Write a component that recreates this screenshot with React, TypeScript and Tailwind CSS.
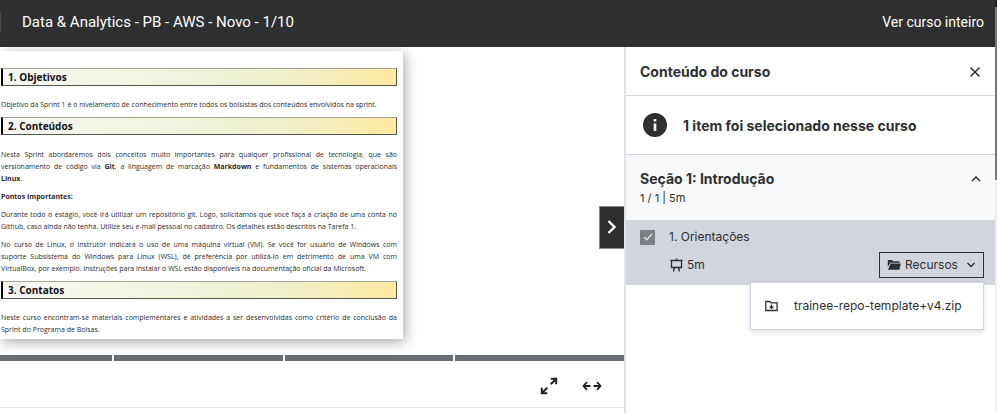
import type { ReactNode } from "react";

function Heading({ children }: { children: ReactNode }) {
  return (
    <h2 className="flex h-[18px] items-center border border-l-2 border-[#55564a] border-t-[#a3a491] border-l-black bg-linear-to-r from-[#f7f8f6] via-[#eef0cd] via-70% to-[#ffe9a0] pl-[5px] font-['Open_Sans',sans-serif] text-[10px] font-bold text-[#111]">
      {children}
    </h2>
  );
}

function Paragraph({ lines, last }: { lines: ReactNode[]; last?: ReactNode }) {
  return (
    <p className="text-[7px] leading-3">
      {lines.map((line, i) => (
        <span key={i} className="block whitespace-nowrap [text-align-last:justify]">
          {line}
        </span>
      ))}
      {last && <span className="block whitespace-nowrap">{last}</span>}
    </p>
  );
}

function Slide() {
  return (
    <article className="w-[403px] bg-white px-px pt-[17px] pr-1.5 pb-[3px] font-['Open_Sans',sans-serif] text-[#2b2b2b] shadow-[2px_3px_12px_rgba(0,0,0,0.35)]">
      <Heading>1. Objetivos</Heading>
      <div className="pt-[13px] pb-1.5">
        <Paragraph
          lines={[]}
          last="Objetivo da Sprint 1 é o nivelamento de conhecimento entre todos os bolsistas dos conteúdos envolvidos na sprint."
        />
      </div>
      <Heading>2. Conteúdos</Heading>
      <div className="flex flex-col gap-1.5 pt-3.5 pb-1.5">
        <Paragraph
          lines={[
            "Nesta Sprint abordaremos dois conceitos muito importantes para qualquer profissional de tecnologia, que são",
            <>versionamento de código via <b>Git</b>, a linguagem de marcação <b>Markdown</b> e fundamentos de sistemas operacionais</>,
          ]}
          last={<><b>Linux</b>.</>}
        />
        <Paragraph lines={[]} last={<b>Pontos Importantes:</b>} />
        <Paragraph
          lines={["Durante todo o estágio, você irá utilizar um repositório git. Logo, solicitamos que você faça a criação de uma conta no"]}
          last="Github, caso ainda não tenha. Utilize seu e-mail pessoal no cadastro. Os detalhes estão descritos na Tarefa 1."
        />
        <Paragraph
          lines={[
            "No curso de Linux, o instrutor indicará o uso de uma máquina virtual (VM). Se você for usuário de Windows com",
            "suporte Subsistema do Windows para Linux (WSL), dê preferência por utilizá-lo em detrimento de uma VM com",
          ]}
          last="VirtualBox, por exemplo. Instruções para instalar o WSL estão disponíveis na documentação oficial da Microsoft."
        />
      </div>
      <Heading>3. Contatos</Heading>
      <div className="pt-[13px]">
        <Paragraph
          lines={["Neste curso encontram-se materiais complementares e atividades a ser desenvolvidas como critério de conclusão da"]}
          last="Sprint do Programa de Bolsas."
        />
      </div>
    </article>
  );
}

function Viewer() {
  return (
    <main className="flex min-w-0 flex-1 flex-col">
      <div className="flex items-center justify-between overflow-hidden pt-1 pb-4">
        <Slide />
        <button aria-label="Próxima aula" className="mt-16 flex h-[43px] w-[25px] items-center justify-center border border-r-0 border-[#85878a] bg-[#2d2f31] text-white">
          <svg viewBox="0 0 10 16" className="h-4 w-2.5" fill="none" stroke="currentColor" strokeWidth="2.4">
            <path d="M1.5 2 7.5 8 1.5 14" />
          </svg>
        </button>
      </div>
      <div className="flex h-1.5 gap-0.5">
        <span className="w-28 bg-[#6a6f73]" />
        <span className="flex-1 bg-[#6a6f73]" />
        <span className="flex-1 bg-[#6a6f73]" />
        <span className="flex-1 bg-[#6a6f73]" />
      </div>
      <div className="flex h-[47px] items-center justify-end gap-6 border-b border-[#dfe1e4] pt-1 pr-[22px] text-[#222]">
        <button aria-label="Tela cheia">
          <svg viewBox="0 0 18 18" className="size-[18px]" fill="none" stroke="currentColor" strokeWidth="2">
            <path d="M10.800 1.800h5.400v5.400M16 2l-5.300 5.300M1.800 10.800v5.400h5.400M2 16l5.300-5.300" />
          </svg>
        </button>
        <button aria-label="Expandir visualização">
          <svg viewBox="0 0 20 18" className="h-[18px] w-5" fill="none" stroke="currentColor" strokeWidth="1.800">
            <path d="M5 5.200 1.500 9 5 12.800M1.500 9H8.500M15 5.200 18.500 9 15 12.800M18.500 9H11.500" />
          </svg>
        </button>
      </div>
    </main>
  );
}

function Sidebar() {
  return (
    <aside className="w-[371px] shrink-0 border-l-2 border-[#dfe2e6]">
      <div className="flex h-[49px] items-center justify-between border-b border-[#d6d8de] px-3.5 pt-px">
        <h2 className="text-[14px] font-bold">Conteúdo do curso</h2>
        <button aria-label="Fechar">
          <svg viewBox="0 0 12 12" className="size-3" fill="none" stroke="currentColor" strokeWidth="1.5">
            <path d="m1.500 1.500 9 9M10.500 1.500l-9 9" />
          </svg>
        </button>
      </div>
      <div className="flex h-[59px] items-center gap-4 border-b border-[#d1d5db] pl-[17px]">
        <svg viewBox="0 0 24 24" className="size-6">
          <circle cx="12" cy="12" r="12" fill="#2d2f31" />
          <path d="M10.700 6h2.600v2.600h-2.600zM10.700 10.500h2.600V18h-2.600z" fill="#fff" />
        </svg>
        <p className="text-[14px] font-bold">1 item foi selecionado nesse curso</p>
      </div>
      <button aria-expanded="true" className="flex h-[65px] w-full items-start justify-between bg-[#f7f9fa] px-3.5 pt-3.5 text-left">
        <span>
          <span className="block text-[14px] leading-5 font-bold">Seção 1: Introdução</span>
          <span className="block text-[11px] leading-[18px]">1 / 1 | 5m</span>
        </span>
        <svg viewBox="0 0 10 8" className="mt-1.5 h-2 w-2.5" fill="none" stroke="currentColor" strokeWidth="1.5">
          <path d="m1 6 4-4 4 4" />
        </svg>
      </button>
      <div className="relative h-[65px] bg-[#d1d5dc] pt-2 pr-[11px] pl-3.5">
        <label className="flex items-center gap-3.5 text-[12px] leading-[18px]">
          <span className="grid size-[15px] place-items-center">
            <input type="checkbox" defaultChecked disabled className="col-start-1 row-start-1 size-[15px] appearance-none bg-[#7d8085]" />
            <svg viewBox="0 0 10 8" className="col-start-1 row-start-1 h-2 w-2.5" fill="none" stroke="#e5e7eb" strokeWidth="1.300">
              <path d="m1 4 2.800 2.800L9 1" />
            </svg>
          </span>
          1. Orientações
        </label>
        <div className="flex items-center justify-between pt-1.5 pl-[30px]">
          <span className="flex items-center gap-1 text-[12px]">
            <svg viewBox="0 0 13 14" className="h-3.5 w-[13px]" fill="none" stroke="currentColor" strokeWidth="1.300">
              <path d="M.5 2.500h12M1.500 2.500v7h10v-7M6.500.5v2M4.500 9.500 3.500 13.500M8.500 9.500l1 4" />
            </svg>
            5m
          </span>
          <button aria-expanded="true" className="flex h-[26px] w-[105px] items-center justify-center gap-1 border border-[#2d2f31] text-[12px]">
            <svg viewBox="0 0 14 12" className="h-3 w-3.5" fill="currentColor">
              <path d="M.8 1H5l1.200 1.200h6.300v1.600H3.200L.8 8zM3.600 4.600h10.200L12.400 10.800H1z" />
            </svg>
            Recursos
            <svg viewBox="0 0 10 8" className="ml-1 h-2 w-2.5" fill="none" stroke="currentColor" strokeWidth="1.400">
              <path d="m1.500 2 3.500 3.500L8.500 2" />
            </svg>
          </button>
        </div>
        <ul className="absolute top-[62px] right-[11px] w-[234px] border border-[#d1d5db] bg-white shadow-[0_2px_6px_rgba(0,0,0,0.12)]">
          <li>
            <a href="#recurso" className="flex h-[46px] items-center gap-4 pl-[14px] text-[12px]">
              <svg viewBox="0 0 13 12" className="h-3 w-[13px]" fill="none" stroke="currentColor" strokeWidth="1.300">
                <path d="M.8 1.500h4l1.300 1.400h6v7.600H.8zM6.500 4.500V8M4.700 6.500 6.500 8.300l1.800-1.800" />
              </svg>
              trainee-repo-template+v4.zip
            </a>
          </li>
        </ul>
      </div>
    </aside>
  );
}

export default function App() {
  return (
    <div className="flex min-h-screen bg-white pr-[3px] font-['Inter',sans-serif] text-[#2d2f31]">
      <div className="flex min-w-0 flex-1 flex-col">
        <header className="flex h-[47px] items-center justify-between bg-[#2d2f31] pr-[11px] pb-0.5 font-['Roboto',sans-serif] text-white">
          <div className="flex items-center">
            <span className="h-5 w-px bg-[#4a4d50]" />
            <h1 className="pl-[21px] text-[15px]">Data &amp; Analytics - PB - AWS - Novo - 1/10</h1>
          </div>
          <a href="#curso" className="text-[14px]">Ver curso inteiro</a>
        </header>
        <div className="flex flex-1">
          <Viewer />
          <Sidebar />
        </div>
      </div>
      <div className="flex w-0.5 flex-col bg-[#eceef1]">
        <div className="h-[7px] bg-[#1c1d1f]" />
        <div className="h-[173px] bg-[#74787b]" />
      </div>
    </div>
  );
}
